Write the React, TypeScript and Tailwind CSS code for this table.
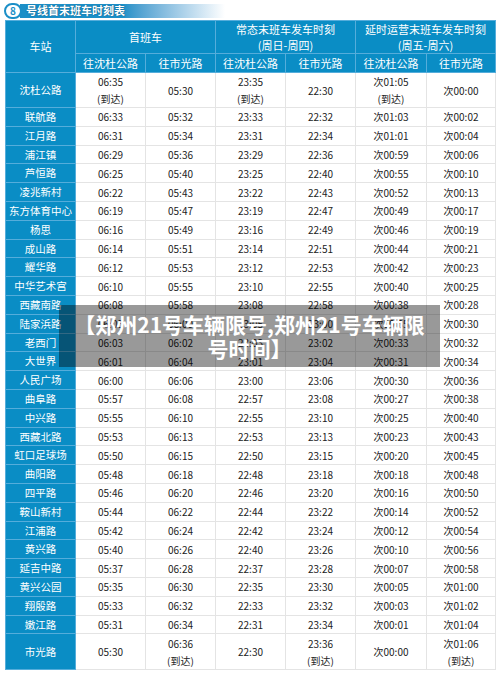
const stations: [string, string, string, string, string, string, string][] = [
  ["沈杜公路", "06:35", "05:30", "23:35", "22:30", "次01:05", "次00:00"],
  ["联航路", "06:33", "05:32", "23:33", "22:32", "次01:03", "次00:02"],
  ["江月路", "06:31", "05:34", "23:31", "22:34", "次01:01", "次00:04"],
  ["浦江镇", "06:29", "05:36", "23:29", "22:36", "次00:59", "次00:06"],
  ["芦恒路", "06:25", "05:40", "23:25", "22:40", "次00:55", "次00:10"],
  ["凌兆新村", "06:22", "05:43", "23:22", "22:43", "次00:52", "次00:13"],
  ["东方体育中心", "06:19", "05:47", "23:19", "22:47", "次00:49", "次00:17"],
  ["杨思", "06:16", "05:49", "23:16", "22:49", "次00:46", "次00:19"],
  ["成山路", "06:14", "05:51", "23:14", "22:51", "次00:44", "次00:21"],
  ["耀华路", "06:12", "05:53", "23:12", "22:53", "次00:42", "次00:23"],
  ["中华艺术宫", "06:10", "05:55", "23:10", "22:55", "次00:40", "次00:25"],
  ["西藏南路", "06:08", "05:58", "23:08", "22:58", "次00:38", "次00:28"],
  ["陆家浜路", "06:05", "06:00", "23:05", "23:00", "次00:35", "次00:30"],
  ["老西门", "06:03", "06:02", "23:03", "23:02", "次00:33", "次00:32"],
  ["大世界", "06:01", "06:04", "23:01", "23:04", "次00:31", "次00:34"],
  ["人民广场", "06:00", "06:06", "23:00", "23:06", "次00:30", "次00:36"],
  ["曲阜路", "05:57", "06:08", "22:57", "23:08", "次00:27", "次00:38"],
  ["中兴路", "05:55", "06:10", "22:55", "23:10", "次00:25", "次00:40"],
  ["西藏北路", "05:53", "06:13", "22:53", "23:13", "次00:23", "次00:43"],
  ["虹口足球场", "05:50", "06:15", "22:50", "23:15", "次00:20", "次00:45"],
  ["曲阳路", "05:48", "06:18", "22:48", "23:18", "次00:18", "次00:48"],
  ["四平路", "05:46", "06:20", "22:46", "23:20", "次00:16", "次00:50"],
  ["鞍山新村", "05:44", "06:22", "22:44", "23:22", "次00:14", "次00:52"],
  ["江浦路", "05:42", "06:24", "22:42", "23:24", "次00:12", "次00:54"],
  ["黄兴路", "05:40", "06:26", "22:40", "23:26", "次00:10", "次00:56"],
  ["延吉中路", "05:37", "06:28", "22:37", "23:28", "次00:07", "次00:58"],
  ["黄兴公园", "05:35", "06:30", "22:35", "23:30", "次00:05", "次01:00"],
  ["翔殷路", "05:33", "06:32", "22:33", "23:32", "次00:03", "次01:02"],
  ["嫩江路", "05:31", "06:34", "22:31", "23:34", "次00:01", "次01:04"],
  ["市光路", "05:30", "06:36", "22:30", "23:36", "次00:00", "次01:06"],
];

// which columns carry "(到达)" on the first / last station
const arriveFirst = [1, 3, 5];
const arriveLast = [2, 4, 6];

function Cell({ time, arrive }: { time: string; arrive: boolean }) {
  return (
    <td className="border border-[#e4e4e4] text-center text-[#222] leading-[17px]">
      {time}
      {arrive && <div>(到达)</div>}
    </td>
  );
}

export default function App() {
  const last = stations.length - 1;

  return (
    <div className="relative w-[500px] h-[673px] bg-white overflow-hidden font-['Noto_Sans_CJK_SC','Noto_Sans',sans-serif]">
      {/* title strip */}
      <div className="flex items-center h-[20px] pl-[4px] pt-[1px]">
        <div className="relative z-10 flex items-center justify-center w-[18px] h-[16px] rounded-full bg-white border-2 border-[#1b8fc7] text-[10px] font-bold text-[#1b8fc7] leading-none">
          8
        </div>
        <div className="-ml-[2px] flex items-center h-[14px] w-[205px] pl-[6px] bg-gradient-to-r from-[#1b8fc7] via-[#1b8fc7] to-white text-[11px] font-bold text-white leading-none [text-shadow:0_0_1px_#0a5f8a,0_0_1px_#0a5f8a]">
          号线首末班车时刻表
        </div>
      </div>

      <table className="ml-[5px] w-[490px] table-fixed border-collapse text-[10px]">
        <colgroup>
          <col className="w-[70px]" />
          <col className="w-[70px]" />
          <col className="w-[70px]" />
          <col className="w-[70px]" />
          <col className="w-[70px]" />
          <col className="w-[71px]" />
          <col className="w-[69px]" />
        </colgroup>
        <thead className="bg-[#0a8dc5] text-white text-[11px]">
          <tr className="h-[33px]">
            <th rowSpan={2} className="border border-[#55addb] font-normal">车站</th>
            <th colSpan={2} className="border border-[#55addb] font-normal">首班车</th>
            <th colSpan={2} className="border border-[#55addb] font-normal leading-[16px]">
              常态末班车发车时刻
              <div>(周日-周四)</div>
            </th>
            <th colSpan={2} className="border border-[#55addb] font-normal leading-[16px]">
              延时运营末班车发车时刻
              <div>(周五-周六)</div>
            </th>
          </tr>
          <tr className="h-[19px]">
            <th className="border border-[#55addb] font-normal">往沈杜公路</th>
            <th className="border border-[#55addb] font-normal">往市光路</th>
            <th className="border border-[#55addb] font-normal">往沈杜公路</th>
            <th className="border border-[#55addb] font-normal">往市光路</th>
            <th className="border border-[#55addb] font-normal">往沈杜公路</th>
            <th className="border border-[#55addb] font-normal">往市光路</th>
          </tr>
        </thead>
        <tbody>
          {stations.map((row, i) => (
            <tr key={row[0]} className={i === 0 ? "h-[34px]" : i === last ? "h-[36px]" : "h-[18.8px]"}>
              <td className="border border-[#55addb] bg-[#0a8dc5] text-center text-white text-[10.5px] whitespace-nowrap">
                {row[0]}
              </td>
              {row.slice(1).map((t, c) => (
                <Cell
                  key={c}
                  time={t}
                  arrive={(i === 0 && arriveFirst.includes(c + 1)) || (i === last && arriveLast.includes(c + 1))}
                />
              ))}
            </tr>
          ))}
        </tbody>
      </table>

      {/* caption overlay */}
      <div className="absolute left-[59px] top-[305px] w-[381px] h-[62px] bg-black/40 px-[14px] flex items-center justify-center text-center text-white text-[21px] font-bold leading-[24px]">
        【郑州21号车辆限号,郑州21号车辆限号时间】
      </div>
    </div>
  );
}
